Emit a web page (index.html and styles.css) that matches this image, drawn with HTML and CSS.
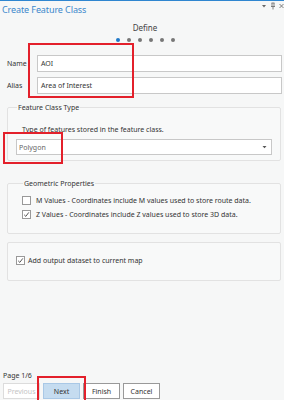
FILE: index.html
```html
<!DOCTYPE html>
<html lang="en">
<head>
<meta charset="UTF-8">
<meta name="viewport" content="width=device-width, initial-scale=1.0">
<title>Create Feature Class</title>
<link rel="stylesheet" href="styles.css">
</head>
<body>
  <div class="pane">
    <div class="header">
      <span class="title">Create Feature Class</span>
      <span class="tools">
        <svg width="6" height="6" viewBox="0 0 6 6"><path d="M1 2h4L3 4.5z" fill="#666"/></svg>
        <svg width="6" height="8" viewBox="0 0 6 8"><path d="M1.5 1h3M2 1v3.5M4 1v3.5M1 4.5h4M3 4.5V7.5" stroke="#666" stroke-width="0.8" fill="none"/></svg>
        <svg width="5" height="6" viewBox="0 0 5 6"><path d="M0.5 1l4 4M4.5 1l-4 4" stroke="#666" stroke-width="0.8"/></svg>
      </span>
    </div>

    <div class="step">
      <div class="step-name">Define</div>
      <div class="dots">
        <span class="dot active"></span>
        <span class="dot"></span>
        <span class="dot"></span>
        <span class="dot"></span>
        <span class="dot"></span>
        <span class="dot"></span>
      </div>
    </div>

    <div class="fields">
      <div class="field">
        <label>Name</label>
        <div class="input">AOI</div>
      </div>
      <div class="field">
        <label>Alias</label>
        <div class="input">Area of Interest</div>
      </div>
    </div>

    <fieldset class="group">
      <legend>Feature Class Type</legend>
      <div class="hint">Type of features stored in the feature class.</div>
      <div class="select">
        <span>Polygon</span>
        <svg width="5" height="4" viewBox="0 0 5 4"><path d="M0.5 1h4L2.5 3.2z" fill="#555"/></svg>
      </div>
    </fieldset>

    <fieldset class="group geo">
      <legend>Geometric Properties</legend>
      <div class="check">
        <span class="box"></span>
        <span>M Values - Coordinates include M values used to store route data.</span>
      </div>
      <div class="check">
        <span class="box"><svg width="7" height="7" viewBox="0 0 7 7"><path d="M1.2 3.8l1.6 1.6 3-4" stroke="#444" stroke-width="0.9" fill="none"/></svg></span>
        <span>Z Values - Coordinates include Z values used to store 3D data.</span>
      </div>
    </fieldset>

    <div class="group plain">
      <div class="check">
        <span class="box"><svg width="7" height="7" viewBox="0 0 7 7"><path d="M1.2 3.8l1.6 1.6 3-4" stroke="#444" stroke-width="0.9" fill="none"/></svg></span>
        <span>Add output dataset to current map</span>
      </div>
    </div>

    <div class="footer">
      <div class="page">Page 1/6</div>
      <div class="buttons">
        <button class="btn disabled">Previous</button>
        <button class="btn primary">Next</button>
        <button class="btn">Finish</button>
        <button class="btn">Cancel</button>
      </div>
    </div>

    <div class="mark mark-name"></div>
    <div class="mark mark-type"></div>
    <div class="mark mark-next"></div>
  </div>
</body>
</html>
```

FILE: styles.css
```css
body {
  margin: 0;
  padding: 0;
  background-color: #f6f7f7;
  font-family: "Noto Sans", "Open Sans", sans-serif;
  color: #333;
}

.pane {
  position: relative;
  height: 400px;
  display: flex;
  flex-direction: column;
  border-top: 1px solid #2f86d0;
  box-sizing: border-box;
  overflow: hidden;
}

.header {
  display: flex;
  justify-content: space-between;
  align-items: center;
  height: 16px;
  padding: 0 0 0 2px;
}

.title {
  color: #3a87cc;
  font-size: 9px;
  letter-spacing: -0.1px;
}

.tools {
  display: flex;
  align-items: center;
  gap: 3px;
  margin-top: -6px;
}

.step {
  text-align: center;
  padding-top: 5px;
  margin-left: 6px;
}

.step-name {
  font-size: 8px;
  color: #444;
  line-height: 11px;
}

.dots {
  display: flex;
  justify-content: center;
  gap: 7px;
  margin-top: 5px;
}

.dot {
  width: 4px;
  height: 4px;
  border-radius: 50%;
  background-color: #777;
}

.dot.active {
  background-color: #1f78c8;
}

.fields {
  padding: 13px 2px 0 7px;
}

.field {
  display: flex;
  align-items: center;
  margin-bottom: 5px;
}

.field label {
  width: 30px;
  font-size: 7px;
}

.input {
  flex: 1;
  height: 15px;
  line-height: 15px;
  background-color: #fff;
  border: 1px solid #c8c8c8;
  padding-left: 3px;
  font-size: 7px;
}

.group {
  margin: 4px 3px 0 7px;
  padding: 13px 8px 5px 8px;
  border: 1px solid #e2e2e2;
  border-radius: 2px;
  background-color: #f8f9f9;
  font-size: 7px;
}

.group legend {
  padding: 0 1px;
  margin-left: 1px;
  font-size: 7px;
  color: #333;
}

.hint {
  padding-left: 6px;
  margin-bottom: 5px;
}

.select {
  display: flex;
  justify-content: space-between;
  align-items: center;
  height: 14px;
  background-color: #fff;
  border: 1px solid #c8c8c8;
  padding: 0 4px 0 2px;
  color: #666;
}

.geo {
  margin-top: 18px;
  padding: 5px 8px 12px 14px;
}

.check {
  display: flex;
  align-items: center;
  gap: 5px;
  height: 14px;
}

.box {
  width: 9px;
  height: 9px;
  border: 1px solid #999;
  background-color: #fff;
  box-sizing: border-box;
  display: flex;
  align-items: center;
  justify-content: center;
}

.plain {
  margin-top: 8px;
  padding: 10px 8px 13px 8px;
}

.plain .check {
  gap: 3px;
}

.footer {
  margin-top: auto;
  padding: 0 0 1px 3px;
}

.page {
  font-size: 7px;
  margin-bottom: 3px;
}

.buttons {
  display: flex;
  gap: 3px;
}

.btn {
  width: 37px;
  height: 16px;
  padding: 0;
  font-family: inherit;
  font-size: 7px;
  color: #333;
  background-color: #fff;
  border: 1px solid #999;
}

.btn.disabled {
  color: #c4c4c4;
  border-color: #dcdcdc;
}

.btn.primary {
  background-color: #c5dcf0;
  border-color: #a9c8e6;
}

.mark {
  position: absolute;
  border: 2px solid #e3202b;
}

.mark-name {
  left: 28px;
  top: 42px;
  width: 102px;
  height: 51px;
}

.mark-type {
  left: 3px;
  top: 131px;
  width: 56px;
  height: 28px;
}

.mark-next {
  left: 37px;
  top: 375px;
  width: 45px;
  height: 30px;
}
```
